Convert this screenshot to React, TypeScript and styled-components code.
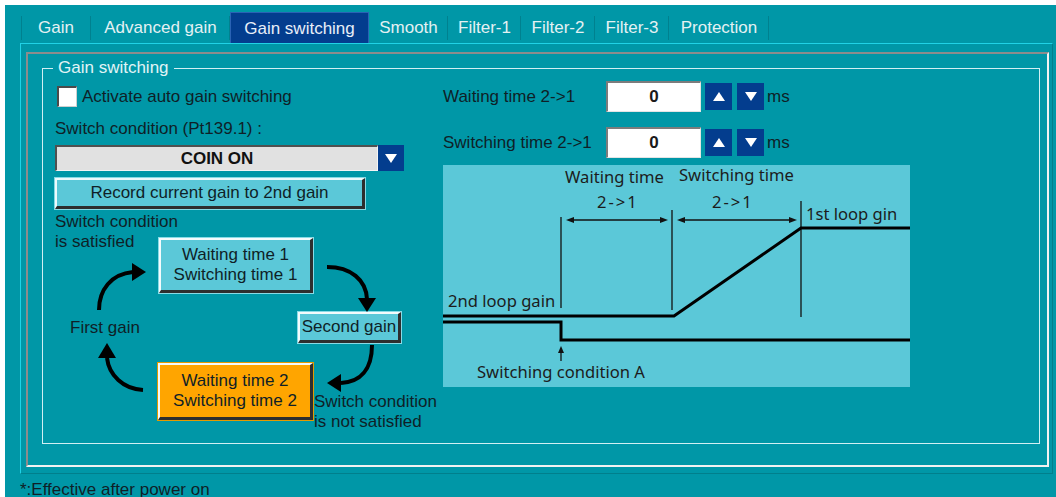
import React from 'react';
import styled, { createGlobalStyle, css } from 'styled-components';

const teal = '#0097a7';
const navy = '#033d8e';
const ink = '#0f1f27';
const paleCyan = '#5bc8d8';

const GlobalStyle = createGlobalStyle`
  html, body {
    margin: 0;
    padding: 0;
    background: #fff;
    overflow: hidden;
  }
  body {
    font-family: "Liberation Sans", Arial, sans-serif;
    font-size: 17px;
  }
`;

const Window = styled.div`
  margin: 5px 0 0 5px;
  height: 492px;
  padding-top: 7px;
  box-sizing: border-box;
  background: ${teal};
  overflow: hidden;
`;

const TabBar = styled.div`
  display: flex;
  height: 31px;
  padding-left: 16px;
`;

const Tab = styled.div<{ $active?: boolean; $first?: boolean; $w: number }>`
  position: relative;
  width: ${(p) => p.$w}px;
  box-sizing: border-box;
  text-align: center;
  line-height: 32px;
  color: #e4f1f3;
  white-space: nowrap;

  &::after {
    content: '';
    position: absolute;
    right: 0;
    top: 4px;
    bottom: 3px;
    width: 1px;
    background: #00818f;
  }

  ${(p) =>
    p.$first &&
    css`
      &::before {
        content: '';
        position: absolute;
        left: 0;
        top: 4px;
        bottom: 3px;
        width: 1px;
        background: #00818f;
      }
    `}

  ${(p) =>
    p.$active &&
    css`
      background: ${navy};
      border: 1px solid #2a62b4;
      border-bottom: none;
      line-height: 31px;
      color: #e8eef8;
      &::after {
        display: none;
      }
    `}
`;

const Panel = styled.div`
  margin-left: 15px;
  width: 1033px;
  box-sizing: border-box;
  border-top: 1px solid #20d2e6;
  border-left: 1px solid #20d2e6;
  border-right: 1px solid #007f8c;
  border-bottom: 1px solid #007f8c;
  padding: 8px 3px 6px 5px;
`;

const Frame = styled.div`
  height: 415px;
  box-sizing: border-box;
  border: 2px solid;
  border-color: #8c8c8c #f2f2f2 #f2f2f2 #8c8c8c;
  padding: 14px 7px 21px 14px;
`;

const GroupBox = styled.div`
  position: relative;
  height: 376px;
  box-sizing: border-box;
  border: 1px solid #d2eff3;
  padding: 12px 0 0 12px;
  display: grid;
  grid-template-columns: 388px 467px;
  align-items: start;
`;

const Legend = styled.div`
  position: absolute;
  top: -10px;
  left: 10px;
  padding: 0 5px;
  line-height: 18px;
  background: ${teal};
  color: #e0f4f6;
`;

const LeftCol = styled.div`
  display: flex;
  flex-direction: column;
  align-items: flex-start;
  padding-top: 5px;
  color: ${ink};
`;

const CheckRow = styled.label`
  display: flex;
  align-items: center;
  gap: 5px;
  height: 21px;
  padding-left: 2px;
  line-height: 20px;
`;

const CheckBox = styled.span`
  width: 20px;
  height: 21px;
  box-sizing: border-box;
  background: #fff;
  border-style: solid;
  border-width: 2px 1px 1px 2px;
  border-color: #4a4a4a #cfcfcf #cfcfcf #4a4a4a;
`;

const Prompt = styled.div`
  margin-top: 12px;
  line-height: 20px;
`;

const Select = styled.div`
  margin-top: 6px;
  display: flex;
  width: 349px;
  height: 26px;
`;

const SelectField = styled.div`
  flex: 1;
  box-sizing: border-box;
  background: #e1e1e1;
  border-style: solid;
  border-width: 2px 1px 1px 2px;
  border-color: #505050 #f4f4f4 #f4f4f4 #505050;
  font-weight: bold;
  text-align: center;
  line-height: 23px;
  color: #111;
`;

const NavyButton = styled.div<{ $size: number }>`
  width: ${(p) => p.$size}px;
  height: ${(p) => p.$size}px;
  background: ${navy};
  display: flex;
  align-items: center;
  justify-content: center;
  flex-shrink: 0;
`;

const RaisedButton = styled.div`
  margin-top: 7px;
  width: 310px;
  height: 31px;
  box-sizing: border-box;
  background: ${paleCyan};
  border-style: solid;
  border-width: 2px 3px 3px 2px;
  border-color: #eefafc #2d2d2d #2d2d2d #eefafc;
  box-shadow: 0 0 0 1px #86dae5;
  text-align: center;
  line-height: 25px;
  color: ${ink};
`;

const Diagram = styled.div`
  position: relative;
  margin-top: 3px;
  width: 388px;
  height: 220px;
`;

const DiagramText = styled.div<{ $x: number; $y: number }>`
  position: absolute;
  left: ${(p) => p.$x}px;
  top: ${(p) => p.$y}px;
  line-height: 20px;
  white-space: nowrap;
  color: ${ink};
`;

const DiagramNode = styled.div<{ $x: number; $y: number; $w: number; $h: number; $tone?: 'cyan' | 'orange' }>`
  position: absolute;
  left: ${(p) => p.$x}px;
  top: ${(p) => p.$y}px;
  width: ${(p) => p.$w}px;
  height: ${(p) => p.$h}px;
  box-sizing: border-box;
  display: flex;
  flex-direction: column;
  align-items: center;
  justify-content: center;
  line-height: 20px;
  white-space: nowrap;
  color: ${ink};
  background: ${(p) => (p.$tone === 'orange' ? '#ffa500' : paleCyan)};
  border-style: solid;
  border-width: 2px 3px 3px 2px;
  border-color: #f4fbfc #2e2e2e #2e2e2e #f4fbfc;
  box-shadow: 0 0 0 1px ${(p) => (p.$tone === 'orange' ? '#e39a00' : '#88dbe6')};
`;

const ArrowLayer = styled.svg`
  position: absolute;
  left: 0;
  top: 0;
  width: 388px;
  height: 220px;
  overflow: visible;
  pointer-events: none;
`;

const RightCol = styled.div`
  display: flex;
  flex-direction: column;
  color: ${ink};
`;

const FieldRow = styled.div<{ $gapTop?: number }>`
  display: flex;
  align-items: center;
  height: 31px;
  margin-top: ${(p) => p.$gapTop ?? 0}px;
`;

const FieldLabel = styled.div`
  width: 163px;
  white-space: nowrap;
`;

const NumberInput = styled.div`
  width: 95px;
  height: 31px;
  box-sizing: border-box;
  margin-right: 4px;
  background: #fff;
  border-style: solid;
  border-width: 2px 1px 1px 2px;
  border-color: #7c7c7c #e4e4e4 #e4e4e4 #7c7c7c;
  text-align: center;
  font-weight: bold;
  line-height: 28px;
  color: #1a1a1a;
`;

const SpinGroup = styled.div`
  display: flex;
  gap: 5px;
`;

const Unit = styled.span`
  margin-left: 3px;
`;

const Chart = styled.svg`
  display: block;
  margin-top: 7px;
  width: 467px;
  height: 222px;
  background: ${paleCyan};
  font-family: "Noto Sans", "Open Sans", sans-serif;
  font-size: 16.6px;
`;

const Footer = styled.div`
  margin: 6px 0 0 15px;
  line-height: 20px;
  color: ${ink};
`;

function Triangle({ dir }: { dir: 'up' | 'down' }) {
  const pts = dir === 'up' ? '1,10 7,1 13,10' : '1,1 13,1 7,10';
  return (
    <svg width="14" height="11" viewBox="0 0 14 11">
      <polygon points={pts} fill="#fff" />
    </svg>
  );
}

const tabs: { label: string; width: number }[] = [
  { label: 'Gain', width: 70 },
  { label: 'Advanced gain', width: 139 },
  { label: 'Gain switching', width: 139 },
  { label: 'Smooth', width: 79 },
  { label: 'Filter-1', width: 73 },
  { label: 'Filter-2', width: 74 },
  { label: 'Filter-3', width: 74 },
  { label: 'Protection', width: 100 },
];

function CycleArrows() {
  return (
    <ArrowLayer viewBox="0 0 388 220">
      <g fill="none" stroke="#000" strokeWidth="4">
        <path d="M44,98 C44,78 56,62 78,60" />
        <path d="M272,55 C296,55 311,68 312,87" />
        <path d="M317,133 C317,158 305,170 286,171" />
        <path d="M88,178 C68,177 54,163 52,146" />
      </g>
      <g fill="#000">
        <polygon points="77,51 91,60 77,69" />
        <polygon points="303,86 312,100 321,86" />
        <polygon points="286,162 272,171 286,180" />
        <polygon points="43,146 52,131 61,146" />
      </g>
    </ArrowLayer>
  );
}

function TimingChart() {
  return (
    <Chart viewBox="0 0 467 222">
      <g fill="#1c1c1c">
        <text x="122" y="18">Waiting time</text>
        <text x="236" y="16">Switching time</text>
        <text x="154" y="43" letterSpacing="2">2-&gt;1</text>
        <text x="269" y="43" letterSpacing="2">2-&gt;1</text>
        <text x="363" y="55">1st loop gin</text>
        <text x="5" y="142">2nd loop gain</text>
        <text x="34" y="213">Switching condition A</text>
      </g>
      <g stroke="#111" strokeWidth="1.3" fill="none">
        <line x1="118" y1="52" x2="118" y2="143" />
        <line x1="229" y1="45" x2="229" y2="145" />
        <line x1="358" y1="36" x2="358" y2="152" />
        <line x1="126" y1="55" x2="222" y2="55" />
        <line x1="237" y1="55" x2="351" y2="55" />
        <line x1="118" y1="196" x2="118" y2="186" />
      </g>
      <g fill="#111">
        <polygon points="123,55 131,52 131,58" />
        <polygon points="225,55 217,52 217,58" />
        <polygon points="234,55 242,52 242,58" />
        <polygon points="354,55 346,52 346,58" />
        <polygon points="118,181 115,188 121,188" />
      </g>
      <g stroke="#000" strokeWidth="3" fill="none">
        <path d="M0,151 H231 L358,63 H467" />
        <path d="M0,157 H118 V175 H467" />
      </g>
    </Chart>
  );
}

export default function App() {
  return (
    <>
      <GlobalStyle />
      <Window>
        <TabBar>
          {tabs.map((t, i) => (
            <Tab key={t.label} $w={t.width} $first={i === 0} $active={t.label === 'Gain switching'}>
              {t.label}
            </Tab>
          ))}
        </TabBar>
        <Panel>
          <Frame>
            <GroupBox>
              <Legend>Gain switching</Legend>
              <LeftCol>
                <CheckRow>
                  <CheckBox />
                  Activate auto gain switching
                </CheckRow>
                <Prompt>Switch condition (Pt139.1) :</Prompt>
                <Select>
                  <SelectField>COIN ON</SelectField>
                  <NavyButton $size={26}>
                    <Triangle dir="down" />
                  </NavyButton>
                </Select>
                <RaisedButton>Record current gain to 2nd gain</RaisedButton>
                <Diagram>
                  <DiagramText $x={0} $y={0}>
                    Switch condition
                    <br />
                    is satisfied
                  </DiagramText>
                  <DiagramNode $x={104} $y={26} $w={154} $h={55}>
                    <span>Waiting time 1</span>
                    <span>Switching time 1</span>
                  </DiagramNode>
                  <DiagramNode $x={243} $y={100} $w={103} $h={31}>
                    <span>Second gain</span>
                  </DiagramNode>
                  <DiagramText $x={15} $y={106}>First gain</DiagramText>
                  <DiagramNode $x={103} $y={151} $w={155} $h={57} $tone="orange">
                    <span>Waiting time 2</span>
                    <span>Switching time 2</span>
                  </DiagramNode>
                  <DiagramText $x={259} $y={180}>
                    Switch condition
                    <br />
                    is not satisfied
                  </DiagramText>
                  <CycleArrows />
                </Diagram>
              </LeftCol>
              <RightCol>
                <FieldRow>
                  <FieldLabel>Waiting time 2-&gt;1</FieldLabel>
                  <NumberInput>0</NumberInput>
                  <SpinGroup>
                    <NavyButton $size={27}>
                      <Triangle dir="up" />
                    </NavyButton>
                    <NavyButton $size={27}>
                      <Triangle dir="down" />
                    </NavyButton>
                  </SpinGroup>
                  <Unit>ms</Unit>
                </FieldRow>
                <FieldRow $gapTop={15}>
                  <FieldLabel>Switching time 2-&gt;1</FieldLabel>
                  <NumberInput>0</NumberInput>
                  <SpinGroup>
                    <NavyButton $size={27}>
                      <Triangle dir="up" />
                    </NavyButton>
                    <NavyButton $size={27}>
                      <Triangle dir="down" />
                    </NavyButton>
                  </SpinGroup>
                  <Unit>ms</Unit>
                </FieldRow>
                <TimingChart />
              </RightCol>
            </GroupBox>
          </Frame>
        </Panel>
        <Footer>*:Effective after power on</Footer>
      </Window>
    </>
  );
}
